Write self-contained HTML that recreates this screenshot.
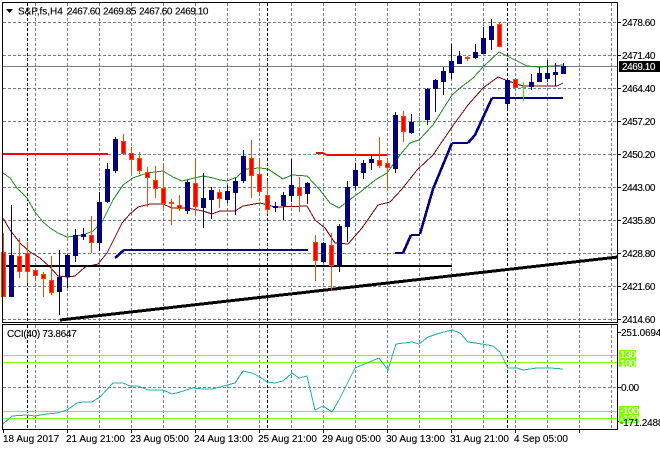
<!DOCTYPE html>
<html><head><meta charset="utf-8"><style>
html,body{margin:0;padding:0;background:#fff;width:660px;height:450px;overflow:hidden}
svg{display:block;position:absolute;left:0;top:0}
text{font-family:"Liberation Sans",sans-serif;font-size:10px;fill:#000;stroke:#000;stroke-width:.12px}
.n{letter-spacing:-.45px}
.w{fill:#fff;stroke:#fff}
</style></head><body>
<svg width="660" height="450" viewBox="0 0 660 450" shape-rendering="crispEdges">
<!-- grid -->
<path fill="none" stroke="#708090" stroke-dasharray="3 2" d="M3 22.5H617M3 55.5H617M3 88.5H617M3 121.5H617M3 154.5H617M3 187.5H617M3 220.5H617M3 253.5H617M3 286.5H617M3 319.5H617M3 387.5H617
M35.5 3V322M67.5 3V322M99.5 3V322M131.5 3V322M163.5 3V322M195.5 3V322M227.5 3V322M259.5 3V322M291.5 3V322M323.5 3V322M355.5 3V322M387.5 3V322M419.5 3V322M451.5 3V322M483.5 3V322M515.5 3V322M547.5 3V322M579.5 3V322M611.5 3V322
M35.5 325V429M67.5 325V429M99.5 325V429M131.5 325V429M163.5 325V429M195.5 325V429M227.5 325V429M259.5 325V429M291.5 325V429M323.5 325V429M355.5 325V429M387.5 325V429M419.5 325V429M451.5 325V429M483.5 325V429M515.5 325V429M547.5 325V429M579.5 325V429M611.5 325V429"/>
<path fill="none" stroke="#000" stroke-dasharray="3 2" d="M27.5 3V322M267.5 3V322M507.5 3V322M27.5 325V429M267.5 325V429M507.5 325V429"/>
<path stroke="#708090" d="M3 66.5H617"/>
<!-- MAs -->
<polyline fill="none" stroke="#228b22" points="3,173 10,178 17,188 27,198 35,212 43,222 50,228 58,233 67,237 75,236 83,235 93,231 102,222 113,200 123,185 133,178 147,173 163,171 173,177 182,181 190,179 203,176 213,178 220,180 227,181 237,177 245,169 260,168 268,169 283,179 292,175 307,176 320,190 330,203 339,208 348,201 363,190 375,180 387,173 400,155 410,143 419,140 433,125 452,95 460,88 473,78 483,67 499,52 513,59 527,66 540,67 563,65"/>
<polyline fill="none" stroke="#800000" points="3,218 10,230 20,243 30,252 40,258 50,267 58,276 68,277 75,276 85,267 98,264 107,253 115,237 122,223 130,214 138,207 150,204 163,204 172,208 187,208 203,211 212,214 220,211 235,211 243,206 260,203 275,207 307,206 315,220 325,228 335,243 348,244 362,228 378,205 390,202 402,189 417,170 433,155 452,127 468,105 483,88 498,77 508,81 523,86 557,86 563,83"/>
<!-- level lines -->
<g fill="none" stroke-width="2">
<path stroke="#f00" d="M3 154H108M316 153H323L327 155H387"/>
<path stroke="#000080" d="M124 250H308M395 253H403M411 235H420M452 143H468M492 98H563"/>
<path stroke="#000080" stroke-width="2.6" d="M115 258L124 250M403 253L411 235M420 234L433 189L452 143M468 143L475 135L492 98"/>
<path stroke="#000" d="M6 266H452"/>
<path stroke="#000" stroke-width="3" d="M60 320L618 257"/>
</g>
<!-- blue wicks -->
<path stroke="#000080" d="M11.5 205V297M59.5 250V315M67.5 254V288M75.5 229V262M83.5 228V240M99.5 192V251M107.5 163V203M115.5 137V173M187.5 180V214M203.5 173V228M211.5 187V219M227.5 185V203M235.5 178V215M243.5 150V183M275.5 202V212M283.5 192V220M291.5 159V202M307.5 182V204M323.5 242V263M339.5 224V272M347.5 181V242M355.5 163V190M363.5 160V179M371.5 156V170M395.5 112V173M411.5 114V134M427.5 88V125M435.5 79V112M443.5 67V95M451.5 44V79M459.5 51V64M475.5 44V59M483.5 27V54M491.5 19V50M507.5 80V108M531.5 74V90M539.5 67V82M547.5 60V82M555.5 63V86M563.5 63V74"/>
<!-- blue bodies -->
<path stroke="#000080" stroke-width="5" d="M11.5 255V297M59.5 277V292M67.5 255V277M75.5 235V256M83.5 234V237M99.5 202V243M107.5 169V202M115.5 139V171M187.5 182V211M203.5 198V208M211.5 190V200M227.5 191V200M235.5 181V193M243.5 156V181M275.5 206V208M283.5 195V206M291.5 185V196M307.5 183V194M323.5 243V262M339.5 226V265M347.5 187V227M355.5 170V186M363.5 163V173M371.5 159V163M395.5 115V169M411.5 122V133M427.5 89V120M435.5 80V89M443.5 71V82M451.5 61V73M459.5 56V64M475.5 52V58M483.5 38V54M491.5 26V40M507.5 80V104M531.5 82V87M539.5 73V82M547.5 73V79M555.5 72V75M563.5 66V74"/>
<!-- red wicks -->
<path stroke="#ff4500" d="M3.5 233V297M19.5 238V278M27.5 242V283M35.5 270V281M43.5 272V297M51.5 256V295M91.5 216V253M123.5 134V154M131.5 147V173M139.5 152V174M147.5 167V207M155.5 166V198M163.5 164V209M171.5 199V225M179.5 195V211M195.5 160V215M219.5 189V208M251.5 140V198M259.5 158V196M267.5 181V214M299.5 177V212M315.5 235V281M331.5 233V291M379.5 137V168M387.5 158V191M403.5 111V142M467.5 56V61M499.5 22V47M515.5 79V88"/>
<!-- red body border -->
<path stroke="#ff4500" stroke-width="5" d="M3.5 252V297M19.5 256V272M27.5 253V272M35.5 270V276M43.5 274V279M51.5 280V293M91.5 235V243M123.5 141V154M131.5 153V160M139.5 158V171M147.5 172V178M155.5 180V189M163.5 188V204M171.5 202V204M179.5 205V209M195.5 183V207M219.5 192V199M251.5 158V176M259.5 174V192M267.5 195V210M299.5 187V196M315.5 242V261M331.5 245V266M379.5 160V166M387.5 163V168M403.5 116V132M467.5 57V59M499.5 24V47M515.5 79V88"/>
<!-- red body fill -->
<path stroke="#f00" stroke-width="3" d="M3.5 253V296M19.5 257V271M27.5 254V271M35.5 271V275M43.5 275V278M51.5 281V292M91.5 236V242M123.5 142V153M131.5 154V159M139.5 159V170M147.5 173V177M155.5 181V188M163.5 189V203M179.5 206V208M195.5 184V206M219.5 193V198M251.5 159V175M259.5 175V191M267.5 196V209M299.5 188V195M315.5 243V260M331.5 246V265M379.5 161V165M387.5 164V167M403.5 117V131M499.5 25V46M515.5 80V87"/>
<!-- green doji -->
<path stroke="#00ff00" d="M419.5 117V125M417 121.5H422M523.5 82V101M521 87.5H526"/>
<!-- indicator -->
<path stroke="#7fff00" d="M3 355.5H617M3 362.5H617M3 411.5H617M3 418.5H617"/>
<polyline fill="none" stroke="#20b2aa" points="3,424 12,416 27,415 35,416 47,414 57,413 67,410 77,403 83,402 92,402 100,397 113,383 123,383 130,386 138,386 148,390 163,390 172,394 180,392 193,388 203,389 212,389 220,387 235,383 243,371 252,373 260,377 267,382 275,383 283,381 292,373 299,378 307,376 315,410 323,406 332,412 339,400 355,368 379,358 388,370 396,344 412,342 419,344 428,337 440,333 452,330 460,333 468,342 482,344 493,346 500,352 508,368 517,368 523,370 537,368 550,368 563,369"/>
<!-- frames -->
<path fill="none" stroke="#000" d="M2.5 2.5H617.5V322.5H2.5ZM2.5 324.5H617.5V429.5H2.5Z"/>
<!-- ticks -->
<path stroke="#000" d="M618 22.5H621M618 55.5H621M618 88.5H621M618 121.5H621M618 154.5H621M618 187.5H621M618 220.5H621M618 253.5H621M618 286.5H621M618 319.5H621M618 332.5H621M618 387.5H621M618 421.5H621M3.5 430V433M67.5 430V433M131.5 430V433M195.5 430V433M259.5 430V433M323.5 430V433M387.5 430V433M451.5 430V433M515.5 430V433M579.5 430V433"/>
<path fill="#000" d="M6 9H13L9.5 13Z" shape-rendering="auto"/>
<rect x="619" y="61" width="41" height="11" fill="#000"/>
<rect x="619" y="350" width="17" height="17" fill="#7fff00"/>
<rect x="619" y="406" width="20" height="17" fill="#7fff00"/>
<g>
<text x="18" y="14.5">S&amp;P,fs,H4</text>
<text x="67" y="14.5" class="n">2467.60</text>
<text x="103" y="14.5" class="n">2469.85</text>
<text x="139" y="14.5" class="n">2467.60</text>
<text x="175" y="14.5" class="n">2469.10</text>
<text x="622" y="26" class="n">2478.60</text>
<text x="622" y="59" class="n">2471.40</text>
<text x="622" y="92" class="n">2464.40</text>
<text x="622" y="125" class="n">2457.20</text>
<text x="622" y="158" class="n">2450.20</text>
<text x="622" y="191" class="n">2443.00</text>
<text x="622" y="224" class="n">2435.80</text>
<text x="622" y="257" class="n">2428.80</text>
<text x="622" y="290" class="n">2421.60</text>
<text x="622" y="323" class="n">2414.60</text>
<text x="622" y="70" class="n w">2469.10</text>
<text x="7" y="337" style="letter-spacing:-.3px">CCI(40) 73.8647</text>
<text x="621" y="336" style="letter-spacing:-.2px">251.0694</text>
<text x="621" y="391" class="n">0.00</text>
<text x="620" y="358" class="n w">130</text>
<text x="620" y="367" class="n w">100</text>
<text x="620" y="414" class="n w">-100</text>
<text x="620" y="422" class="n w">-120</text>
<text x="620" y="426" style="letter-spacing:-.2px">-171.2488</text>
<text x="3" y="442">18 Aug 2017</text>
<text x="66" y="442">21 Aug 21:00</text>
<text x="130" y="442">23 Aug 05:00</text>
<text x="194" y="442">24 Aug 13:00</text>
<text x="258" y="442">25 Aug 21:00</text>
<text x="322" y="442">29 Aug 05:00</text>
<text x="386" y="442">30 Aug 13:00</text>
<text x="450" y="442">31 Aug 21:00</text>
<text x="514" y="442">4 Sep 05:00</text>
</g>
</svg>
</body></html>
